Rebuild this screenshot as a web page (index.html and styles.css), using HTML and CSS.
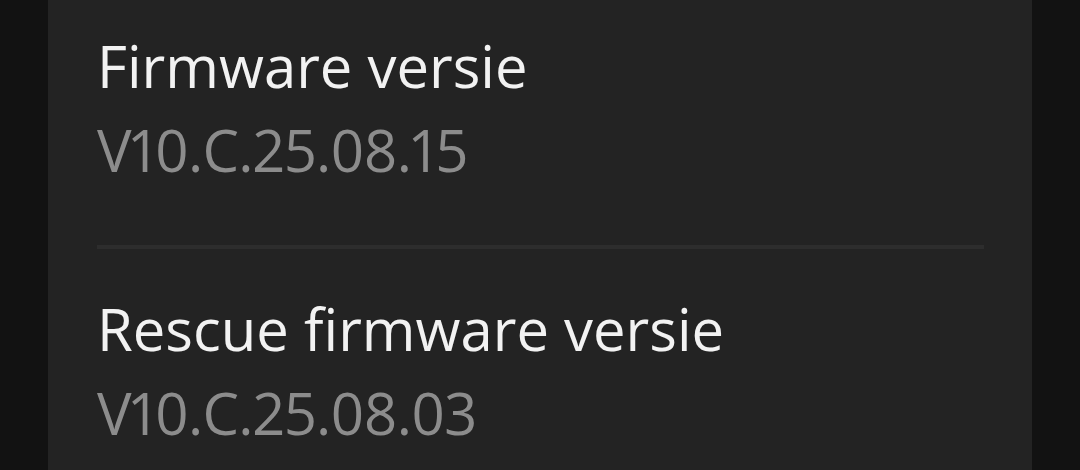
FILE: index.html
```html
<!DOCTYPE html>
<html>
<head>
    <link rel="stylesheet" href="styles.css">
</head>
<body>
    <div class="card">
        <div class="item">
            <div class="title">Firmware versie</div>
            <div class="value">V10.C.25.08.15</div>
        </div>
        <div class="divider"></div>
        <div class="item">
            <div class="title">Rescue firmware versie</div>
            <div class="value">V10.C.25.08.03</div>
        </div>
    </div>
</body>
</html>
```

FILE: styles.css
```css
* {
    margin: 0;
    padding: 0;
    box-sizing: border-box;
}

body {
    background: #121212;
    height: 470px;
    overflow: hidden;
    padding: 0 48px;
    font-family: "Open Sans", sans-serif;
}

.card {
    background: #232323;
    height: 470px;
    padding: 31px 48px 0 49px;
}

.item {
    display: flex;
    flex-direction: column;
    gap: 14px;
}

.title {
    color: #f2f2f2;
    font-size: 58px;
    line-height: 70px;
}

.value {
    color: #8c8c8c;
    font-size: 58px;
    line-height: 70px;
    letter-spacing: -0.8px;
    font-variant-numeric: proportional-nums;
}

.divider {
    height: 4px;
    background: #2d2d2d;
    margin: 60px 0 45px;
}
```
